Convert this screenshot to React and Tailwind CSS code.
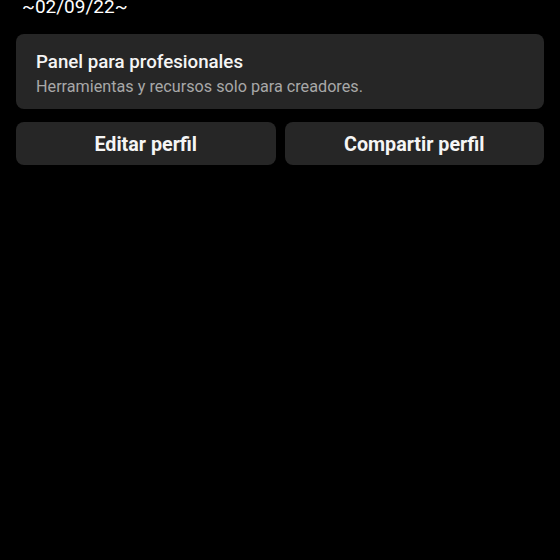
import React from 'react';

const App = () => {
  return (
    <div className="w-[560px] h-[560px] bg-black overflow-hidden px-4 text-white" style={{ fontFamily: 'Roboto, "Noto Sans", sans-serif' }}>
      <div className="mt-[-5px] pl-[6px] text-[19px] leading-[24px]">~02/09/22~</div>
      <div className="mt-[15px] rounded-lg bg-[#262626] px-5 pt-[16px] pb-[12px]">
        <p className="text-[18.7px] leading-[24px] font-medium text-[#f5f5f5]">Panel para profesionales</p>
        <p className="mt-[3px] text-[16.2px] leading-[20px] text-[#a8a8a8]">Herramientas y recursos solo para creadores.</p>
      </div>
      <div className="mt-[13px] grid grid-cols-2 gap-[9px]">
        <button className="h-[43px] pt-[3px] rounded-lg bg-[#262626] text-[19.7px] font-bold text-[#f5f5f5]">Editar perfil</button>
        <button className="h-[43px] pt-[3px] rounded-lg bg-[#262626] text-[19.7px] font-bold text-[#f5f5f5]">Compartir perfil</button>
      </div>
    </div>
  );
};

export default App;
